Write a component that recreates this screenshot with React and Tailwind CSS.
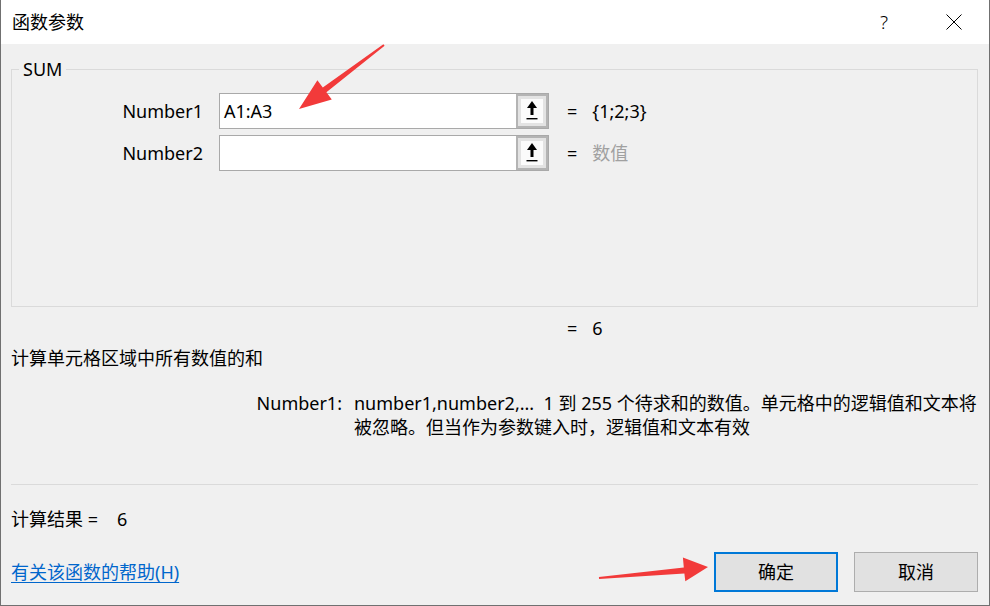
import React from "react";

const font = { fontFamily: '"Noto Sans", "Noto Sans CJK SC", sans-serif' };

function PickIcon() {
  return (
    <svg width="12" height="22" viewBox="0 0 12 22">
      <polygon points="6,1 11,8 1,8" fill="#000" />
      <rect x="4.5" y="7" width="3" height="8" fill="#000" />
      <rect x="0.5" y="18" width="11" height="1.4" fill="#000" />
    </svg>
  );
}

function RefInput({ value }) {
  return (
    <div className="flex h-[36px] w-[330px] border border-[#a9a9a9] bg-white">
      <div className="flex flex-1 items-center px-[4px] text-[18px] text-black">{value}</div>
      <div className="flex w-[32px] border-2 border-[#b4b4b4] bg-[#e3e3e3] p-[3px]">
        <div className="flex flex-1 items-center justify-center bg-[#fbfbfb]">
          <PickIcon />
        </div>
      </div>
    </div>
  );
}

export default function App() {
  return (
    <div
      className="relative flex h-[606px] w-[990px] flex-col overflow-hidden border-x border-b border-[#707070] bg-[#f0f0f0] text-black"
      style={font}
    >
      {/* Title bar */}
      <div className="flex h-[44px] shrink-0 items-center bg-white">
        <div className="flex-1 pl-[11px] text-[18px] leading-none">函数参数</div>
        <div className="flex h-full w-[70px] items-center justify-center text-[19px] font-light leading-none">?</div>
        <div className="flex h-full w-[70px] items-center justify-center">
          <svg width="16" height="16" viewBox="0 0 16 16">
            <path d="M0.5 0.5 L15.5 15.5 M15.5 0.5 L0.5 15.5" stroke="#000" strokeWidth="1" />
          </svg>
        </div>
      </div>

      {/* Body */}
      <div className="flex flex-1 flex-col pl-[10px] pr-[11px] text-[18px]">
        {/* Group box */}
        <div className="relative mt-[25px] h-[238px] border border-[#dadada]">
          <div className="absolute -top-[13px] left-[7px] bg-[#f0f0f0] px-[4px] leading-[24px]">SUM</div>
          <div className="mt-[23px] flex flex-col gap-[6px]">
            <div className="flex items-center">
              <div className="w-[191px] text-right">Number1</div>
              <div className="ml-[16px]">
                <RefInput value="A1:A3" />
              </div>
              <div className="ml-[18px]">=</div>
              <div className="ml-[15px]">{"{1;2;3}"}</div>
            </div>
            <div className="flex items-center">
              <div className="w-[191px] text-right">Number2</div>
              <div className="ml-[16px]">
                <RefInput value="" />
              </div>
              <div className="ml-[18px]">=</div>
              <div className="ml-[15px] text-[#a0a0a0]">数值</div>
            </div>
          </div>
        </div>

        <div className="mt-[9px] flex leading-[24px]">
          <div className="ml-[556px]">=</div>
          <div className="ml-[15px]">6</div>
        </div>

        <div className="mt-[6px] leading-[24px]">计算单元格区域中所有数值的和</div>

        <div className="mt-[21px] flex leading-[24px]">
          <div className="w-[343px] pr-[12px] text-right">Number1:</div>
          <div className="flex-1">
            number1,number2,... &nbsp;1 到 255 个待求和的数值。单元格中的逻辑值和文本将被忽略。但当作为参数键入时，逻辑值和文本有效
          </div>
        </div>

        <div className="mt-[45px] h-px bg-[#dadada]" />

        <div className="mt-[22px] flex leading-[24px]">
          <span>计算结果 =</span>
          <span className="ml-[19px]">6</span>
        </div>

        <div className="mt-[21px] flex items-center">
          <a className="flex-1 text-[#0066cc] underline underline-offset-[3px]" href="#">
            有关该函数的帮助(H)
          </a>
          <button className="flex h-[40px] w-[124px] items-center justify-center border-2 border-[#0078d7] bg-[#e1e1e1] text-[18px]">
            确定
          </button>
          <button className="ml-[16px] flex h-[40px] w-[124px] items-center justify-center border border-[#adadad] bg-[#e1e1e1] text-[18px]">
            取消
          </button>
        </div>
      </div>

      {/* Annotation arrows */}
      <svg className="pointer-events-none absolute left-0 top-0" width="990" height="606" viewBox="0 0 990 606">
        <polygon
          points="298,109 330.8,99.4 325.4,92.2 383.6,45.8 382.4,44.2 321.8,87.4 316.4,80.2"
          fill="#f23a3a"
        />
        <polygon
          points="707,567 684.3,581.3 683.4,573.4 598.1,579 597.9,577 682.8,567.4 681.9,557.5"
          fill="#f23a3a"
        />
      </svg>
    </div>
  );
}
